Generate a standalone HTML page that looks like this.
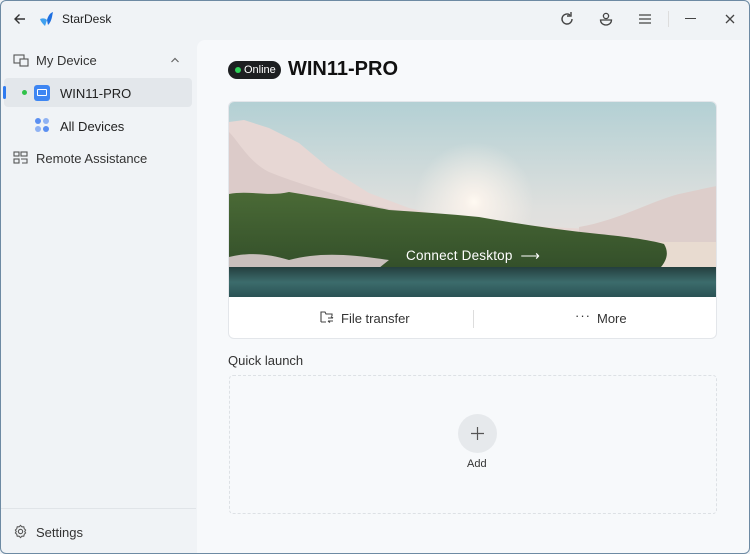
<!DOCTYPE html>
<html><head><style>
*{margin:0;padding:0;box-sizing:border-box}
body{width:750px;height:554px;overflow:hidden;font-family:"Liberation Sans",sans-serif;background:#f0f3f6;position:relative;color:#222}
.frame{position:absolute;inset:0;border:1px solid #6d8aa3;border-radius:6px;pointer-events:none}
.t{position:absolute;white-space:nowrap}
.main{position:absolute;left:197px;top:40px;right:1px;bottom:1px;background:#f7f9fb;border-top-left-radius:8px}
</style></head><body>
<svg class="t" style="left:13px;top:12px" width="14" height="14" viewBox="0 0 14 14"><path d="M12 7H2M6.5 2.5L2 7l4.5 4.5" stroke="#333" stroke-width="1.4" fill="none"/></svg>
<svg class="t" style="left:38px;top:10px" width="18" height="18" viewBox="0 0 18 18"><path d="M2 9c3-1 5-1 7 1l-2 6c-2-2-4-4-5-7z" fill="#3fa0ef"/><path d="M9 10c1-4 3-7 6-8-1 4-1 9-5 13z" fill="#1e6fe0"/></svg>
<div class="t" style="left:62px;top:12px;font-size:12px">StarDesk</div>
<svg class="t" style="left:559px;top:11px" width="16" height="16" viewBox="0 0 16 16"><path d="M13 8a5 5 0 1 1-2-4" stroke="#444" stroke-width="1.4" fill="none"/><path d="M12 1v4H8" stroke="#444" stroke-width="1.4" fill="none"/></svg>
<svg class="t" style="left:598px;top:11px" width="16" height="16" viewBox="0 0 16 16"><circle cx="8" cy="5" r="2.6" stroke="#444" stroke-width="1.3" fill="none"/><path d="M2.5 9h11c0 3-2.5 5-5.5 5s-5.5-2-5.5-5z" stroke="#444" stroke-width="1.3" fill="none"/></svg>
<svg class="t" style="left:638px;top:12px" width="14" height="14" viewBox="0 0 14 14"><path d="M1 3h12M1 7h12M1 11h12" stroke="#444" stroke-width="1.3"/></svg>
<div class="t" style="left:668px;top:11px;width:1px;height:16px;background:#ddd"></div>
<div class="t" style="left:685px;top:18px;width:11px;height:1px;background:#444"></div>
<svg class="t" style="left:725px;top:14px" width="10" height="10" viewBox="0 0 10 10"><path d="M1 1l8 8M9 1L1 9" stroke="#444" stroke-width="1.3"/></svg>

<svg class="t" style="left:13px;top:54px" width="16" height="14" viewBox="0 0 16 14"><rect x="1" y="1" width="10" height="8" stroke="#555" fill="none" stroke-width="1.1"/><rect x="7" y="5" width="8" height="7" stroke="#555" fill="#f0f3f6" stroke-width="1.1"/></svg>
<div class="t" style="left:36px;top:53px;font-size:13px;color:#333">My Device</div>
<svg class="t" style="left:170px;top:56px" width="10" height="8" viewBox="0 0 10 8"><path d="M1.5 6L5 2.5 8.5 6" stroke="#666" stroke-width="1.2" fill="none"/></svg>
<div class="t" style="left:4px;top:78px;width:188px;height:29px;background:#e3e7eb;border-radius:4px"></div>
<div class="t" style="left:3px;top:86px;width:3px;height:13px;background:#2f7bf0;border-radius:2px"></div>
<div class="t" style="left:22px;top:90px;width:5px;height:5px;background:#30c24a;border-radius:50%"></div>
<div class="t" style="left:34px;top:85px;width:16px;height:16px;background:#3e86f2;border-radius:3px"><div style="position:absolute;left:3px;top:4px;width:10px;height:7px;border:1.3px solid #fff;border-radius:1px"></div></div>
<div class="t" style="left:60px;top:86px;font-size:13px;color:#222">WIN11-PRO</div>
<div class="t" style="left:35px;top:118px;width:6px;height:6px;border-radius:50%;background:#5b8ff1"></div>
<div class="t" style="left:43px;top:118px;width:6px;height:6px;border-radius:50%;background:#8fb2f3"></div>
<div class="t" style="left:35px;top:126px;width:6px;height:6px;border-radius:50%;background:#8fb2f3"></div>
<div class="t" style="left:43px;top:126px;width:6px;height:6px;border-radius:50%;background:#5b8ff1"></div>
<div class="t" style="left:60px;top:119px;font-size:13px;color:#222">All Devices</div>
<svg class="t" style="left:13px;top:151px" width="15" height="14" viewBox="0 0 15 14"><rect x="1" y="1" width="5" height="4" stroke="#555" fill="none" stroke-width="1.1"/><rect x="8" y="1" width="6" height="4" stroke="#555" fill="none" stroke-width="1.1"/><rect x="1" y="8" width="5" height="4" stroke="#555" fill="none" stroke-width="1.1"/><path d="M8 8h6v4H9" stroke="#555" fill="none" stroke-width="1.1"/></svg>
<div class="t" style="left:36px;top:151px;font-size:13px;color:#333">Remote Assistance</div>
<div class="t" style="left:0;top:508px;width:196px;height:1px;background:#e0e4e8"></div>
<svg class="t" style="left:13px;top:524px" width="15" height="15" viewBox="0 0 16 16"><circle cx="8" cy="8" r="2.3" stroke="#555" fill="none" stroke-width="1.2"/><path d="M8 1.5l1.5 1.5h2l.5 2 1.5 1.5-1 1.5 1 1.5-1.5 1.5-.5 2h-2L8 14.5 6.5 13h-2l-.5-2L2.5 9.5l1-1.5-1-1.5L4 5l.5-2h2z" stroke="#555" fill="none" stroke-width="1.1"/></svg>
<div class="t" style="left:36px;top:525px;font-size:13px;color:#333">Settings</div>

<div class="main"></div>
<div class="t" style="left:228px;top:61px;width:53px;height:18px;background:#1d1f21;border-radius:9px"></div>
<div class="t" style="left:235px;top:67px;width:6px;height:6px;border-radius:50%;background:#2ed158"></div>
<div class="t" style="left:244px;top:64px;font-size:11px;color:#fff">Online</div>
<div class="t" style="left:288px;top:58px;font-size:20px;font-weight:bold;color:#111">WIN11-PRO</div>

<div class="t" style="left:228px;top:101px;width:489px;height:238px;border:1px solid #e3e6ea;border-radius:6px;background:#fff;overflow:hidden">
<svg width="489" height="195" viewBox="0 0 489 195" style="display:block">
<defs><linearGradient id="sky" x1="0" y1="0" x2="0" y2="1"><stop offset="0" stop-color="#b3d0d4"/><stop offset=".55" stop-color="#dfe0de"/><stop offset="1" stop-color="#eee3dc"/></linearGradient>
<linearGradient id="w" x1="0" y1="0" x2="0" y2="1"><stop offset="0" stop-color="#243f3e"/><stop offset=".5" stop-color="#3c6c6c"/><stop offset="1" stop-color="#2a5254"/></linearGradient>
<linearGradient id="f" x1="0" y1="0" x2="0" y2="1"><stop offset="0" stop-color="#4a6a36"/><stop offset="1" stop-color="#34502a"/></linearGradient>
<radialGradient id="sun" cx="245" cy="100" r="60" gradientUnits="userSpaceOnUse"><stop offset="0" stop-color="#fffaf2"/><stop offset=".15" stop-color="#fff6ee" stop-opacity=".8"/><stop offset="1" stop-color="#fff6ee" stop-opacity="0"/></radialGradient></defs>
<rect width="489" height="195" fill="url(#sky)"/>
<rect width="489" height="195" fill="url(#sun)"/>
<path d="M0 20L15 18 40 26 70 41 100 66 140 91 180 106 220 116 260 120 320 125 380 128 440 130 489 135V195H0z" fill="#e7d7d4"/>
<path d="M0 30C10 40 20 60 40 70 70 82 100 90 130 100 150 105 170 110 190 110H0z" fill="#dccbc9"/>
<path d="M350 125C390 118 420 100 450 92 470 88 480 85 489 84V140H350z" fill="#ddcecb"/>
<path d="M430 140h59v25H430z" fill="#e8dbd0"/>
<path d="M0 92C20 88 40 95 60 90 90 95 120 100 160 108 190 110 220 112 250 115 290 122 330 128 370 132 400 135 420 138 435 142 440 150 438 158 432 165H0z" fill="url(#f)"/>
<path d="M0 155C20 150 40 152 60 158 90 150 120 152 160 158L150 166H0z" fill="#c9bfbc"/>
<rect y="165" width="489" height="30" fill="url(#w)"/>
</svg>
<div style="position:absolute;left:177px;top:146px;font-size:13.5px;color:#fff;letter-spacing:.2px">Connect Desktop &nbsp;⟶</div>
<div style="position:absolute;left:244px;top:208px;width:1px;height:18px;background:#ddd"></div>
<svg style="position:absolute;left:91px;top:209px" width="14" height="13" viewBox="0 0 14 13"><path d="M1 11V1h4l1 2h6v2M1 11h5" stroke="#444" fill="none" stroke-width="1.1"/><path d="M8 7h5M8 10h5M11 5.5L13 7M10 11.5L8 10" stroke="#444" fill="none" stroke-width="1.1"/></svg>
<div style="position:absolute;left:112px;top:209px;font-size:13px;color:#333">File transfer</div>
<div style="position:absolute;left:346px;top:206px;font-size:13px;color:#333;letter-spacing:1px">···</div>
<div style="position:absolute;left:368px;top:209px;font-size:13px;color:#333">More</div>
</div>

<div class="t" style="left:228px;top:353px;font-size:13px;color:#333">Quick launch</div>
<div class="t" style="left:229px;top:375px;width:488px;height:139px;border:1px dashed #dde1e5;border-radius:4px"></div>
<div class="t" style="left:458px;top:414px;width:39px;height:39px;border-radius:50%;background:#e6e9ec"></div>
<svg class="t" style="left:471px;top:427px" width="13" height="13" viewBox="0 0 13 13"><path d="M6.5 0v13M0 6.5h13" stroke="#555" stroke-width="1.2"/></svg>
<div class="t" style="left:467px;top:458px;font-size:11px;color:#333">Add</div>
<div class="frame"></div>
</body></html>
